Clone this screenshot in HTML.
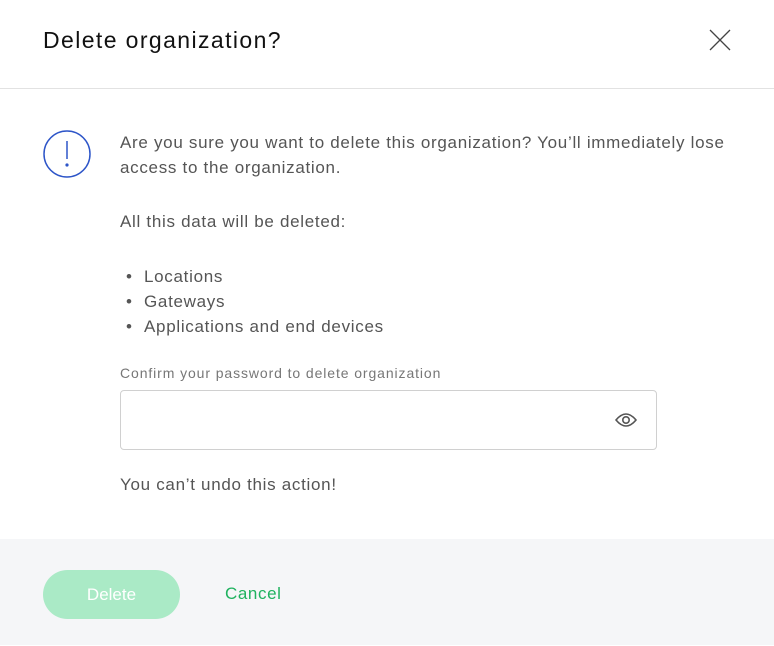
<!DOCTYPE html>
<html><head><style>
body{margin:0;width:774px;height:646px;background:#fff;font-family:"Liberation Sans",sans-serif;position:relative;overflow:hidden}
.a{position:absolute;white-space:nowrap}
.t{color:#555;font-size:17px;letter-spacing:0.7px}
</style></head><body>
<div class="a" style="left:43px;top:27px;font-size:23px;color:#111;letter-spacing:1.4px">Delete organization?</div>
<svg class="a" style="left:709px;top:29px" width="22" height="22"><path d="M1 1L21 21M21 1L1 21" stroke="#444" stroke-width="1.3"/></svg>
<div class="a" style="left:0;top:88px;width:774px;height:1px;background:#e2e2e2"></div>
<svg class="a" style="left:43px;top:130px" width="48" height="48"><circle cx="24" cy="24" r="23" fill="none" stroke="#2d55c8" stroke-width="1.5"/><path d="M24 11V29" stroke="#2d55c8" stroke-width="1.5"/><circle cx="24" cy="35" r="1.6" fill="#2d55c8"/></svg>
<div class="a t" style="left:120px;top:130px;line-height:25px">Are you sure you want to delete this organization? You’ll immediately lose<br>access to the organization.</div>
<div class="a t" style="left:120px;top:209px;line-height:25px">All this data will be deleted:</div>
<div class="a t" style="left:120px;top:264px;line-height:25px">
<div><span style="display:inline-block;width:24px;padding-left:6px;box-sizing:border-box">•</span>Locations</div>
<div><span style="display:inline-block;width:24px;padding-left:6px;box-sizing:border-box">•</span>Gateways</div>
<div><span style="display:inline-block;width:24px;padding-left:6px;box-sizing:border-box">•</span>Applications and end devices</div></div>
<div class="a" style="left:120px;top:365px;font-size:14px;color:#777;letter-spacing:0.9px">Confirm your password to delete organization</div>
<div class="a" style="left:120px;top:390px;width:535px;height:58px;border:1px solid #d0d0d0;border-radius:4px"></div>
<svg class="a" style="left:615px;top:410px" width="22" height="20"><path d="M1 10Q11 -2 21 10Q11 22 1 10Z" fill="none" stroke="#555" stroke-width="1.6"/><circle cx="11" cy="10" r="3.2" fill="none" stroke="#555" stroke-width="1.6"/></svg>
<div class="a t" style="left:120px;top:475px">You can’t undo this action!</div>
<div class="a" style="left:0;top:539px;width:774px;height:106px;background:#f5f6f8"></div>
<div class="a" style="left:43px;top:570px;width:137px;height:49px;border-radius:25px;background:#aaeac6;color:#fff;font-size:17px;text-align:center;line-height:49px">Delete</div>
<div class="a" style="left:225px;top:584px;font-size:17px;color:#1fb25f;letter-spacing:0.6px">Cancel</div>
</body></html>
